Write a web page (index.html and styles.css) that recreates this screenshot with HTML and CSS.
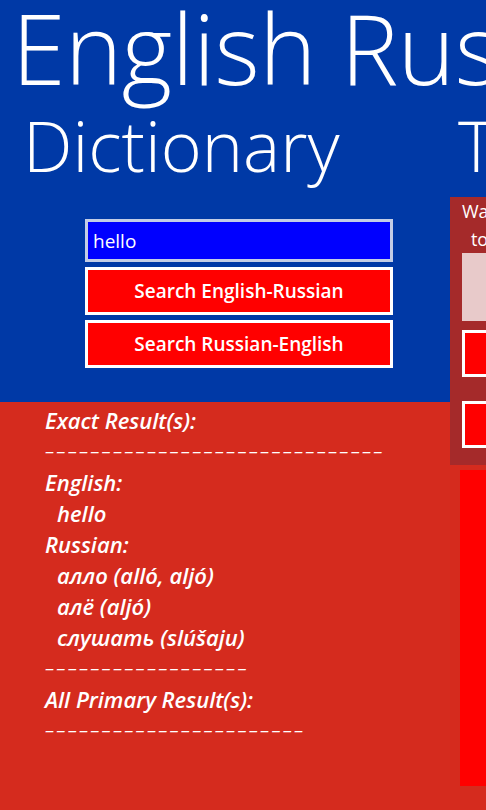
FILE: index.html
```html
<!DOCTYPE html>
<html lang="en">
<head>
    <meta charset="UTF-8">
    <meta name="viewport" content="width=device-width, initial-scale=1.0">
    <title>English Russian Dictionary</title>
    <link rel="stylesheet" href="styles.css">
</head>
<body>
    <div class="panorama">
        <h1 class="app-title">English Russian Dictionary &amp; Translator</h1>

        <div class="panes">
            <!-- dictionary pane -->
            <section class="pane dict">
                <h2 class="pane-title">Dictionary</h2>

                <div class="search">
                    <input type="text" class="search-box" value="hello">
                    <button class="btn">Search English-Russian</button>
                    <button class="btn">Search Russian-English</button>
                </div>

                <div class="results">
                    <p>Exact Result(s):</p>
                    <p class="rule">––––––––––––––––––––––––––––––</p>
                    <p>English:</p>
                    <p class="item">hello</p>
                    <p>Russian:</p>
                    <p class="item">алло (alló, aljó)</p>
                    <p class="item">алё (aljó)</p>
                    <p class="item">слушать (slúšaju)</p>
                    <p class="rule">––––––––––––––––––</p>
                    <p>All Primary Result(s):</p>
                    <p class="rule">–––––––––––––––––––––––</p>
                </div>
            </section>

            <!-- translator pane -->
            <section class="pane trans">
                <h2 class="pane-title">Translator</h2>

                <div class="trans-card">
                    <p class="trans-hint">Want a longer phrase or a sentence translated? Enter it<br>to the box below, then pick the direction</p>
                    <textarea class="trans-input"></textarea>
                    <button class="btn">English to Russian</button>
                    <button class="btn">Russian to English</button>
                </div>

                <div class="trans-output"></div>
            </section>
        </div>
    </div>
</body>
</html>
```

FILE: styles.css
```css
html, body {
    margin: 0;
    padding: 0;
}
body {
    width: 486px;
    height: 810px;
    overflow: hidden;
    font-family: "Open Sans", "Noto Sans", sans-serif;
    color: #fff;
    background: linear-gradient(#0039a6 0, #0039a6 402px, #d52b1e 402px);
}
.panorama {
    width: 900px;
}
.app-title {
    margin: 0;
    padding-left: 12px;
    font-size: 97px;
    font-weight: 300;
    line-height: 94px;
    white-space: nowrap;
    letter-spacing: -0.5px;
}
.panes {
    display: flex;
}
.pane {
    flex: none;
}
.dict {
    width: 450px;
}
.trans {
    width: 420px;
}
.pane-title {
    margin: 0;
    font-size: 70px;
    font-weight: 300;
    line-height: 102px;
    white-space: nowrap;
}
.dict .pane-title {
    padding-left: 23px;
}
.trans .pane-title {
    padding-left: 8px;
}

/* search form */
.search {
    display: flex;
    flex-direction: column;
    gap: 5px;
    width: 308px;
    margin: 23px 0 0 85px;
}
.search-box {
    box-sizing: border-box;
    height: 43px;
    margin: 0;
    padding: 0 5px;
    border: 3px solid #c3cde6;
    background: #0000ff;
    color: #fff;
    font-family: inherit;
    font-size: 19px;
    outline: none;
}
.btn {
    box-sizing: border-box;
    height: 48px;
    margin: 0;
    border: 3px solid #fff;
    background: #ff0000;
    color: #fff;
    font-family: inherit;
    font-size: 19px;
    font-weight: 600;
    cursor: pointer;
}

/* results list */
.results {
    margin-top: 37px;
    padding-left: 45px;
}
.results p {
    margin: 0;
    font-size: 22px;
    font-style: italic;
    font-weight: 600;
    line-height: 31px;
    white-space: nowrap;
}
.results .item {
    padding-left: 12px;
}
.results .rule {
    font-size: 19px;
    font-weight: 400;
    letter-spacing: 2.2px;
}

/* translator card */
.trans-card {
    display: flex;
    flex-direction: column;
    width: 380px;
    margin-top: 1px;
    padding: 0 12px 17px;
    box-sizing: border-box;
    background: #a52a2a;
}
.trans-hint {
    margin: 0;
    font-size: 18px;
    line-height: 28px;
    text-align: center;
    white-space: nowrap;
}
.trans-input {
    box-sizing: border-box;
    height: 68px;
    margin: 0 0 9px;
    border: none;
    background: #e8caca;
    resize: none;
}
.trans-card .btn {
    flex: none;
    height: 47px;
}
.trans-card .btn + .btn {
    margin-top: 24px;
}
.trans-output {
    width: 370px;
    height: 316px;
    margin: 5px 0 0 10px;
    background: #ff0000;
}
```
